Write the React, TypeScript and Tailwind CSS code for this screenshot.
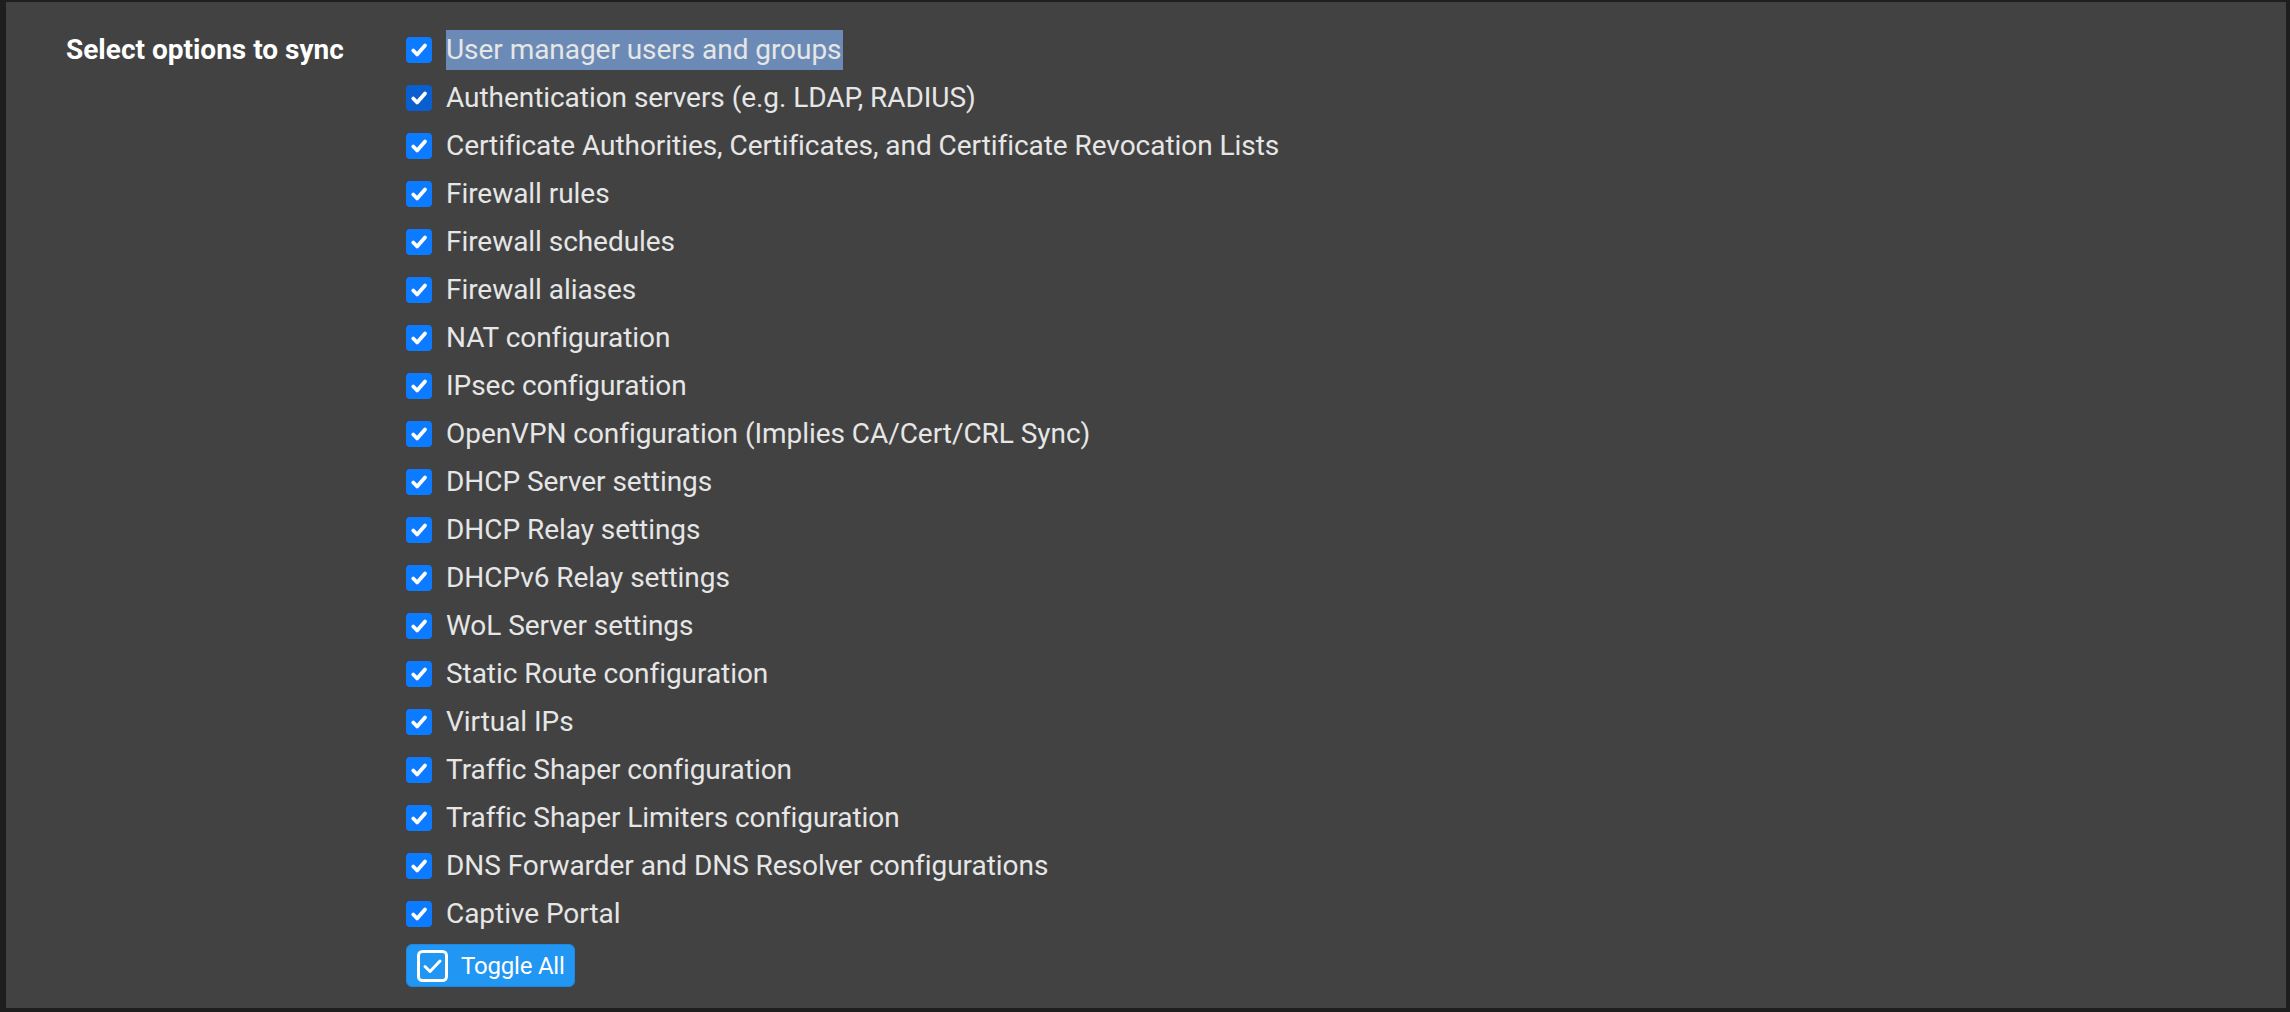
import React from "react";

const OPTIONS = [
  "User manager users and groups",
  "Authentication servers (e.g. LDAP, RADIUS)",
  "Certificate Authorities, Certificates, and Certificate Revocation Lists",
  "Firewall rules",
  "Firewall schedules",
  "Firewall aliases",
  "NAT configuration",
  "IPsec configuration",
  "OpenVPN configuration (Implies CA/Cert/CRL Sync)",
  "DHCP Server settings",
  "DHCP Relay settings",
  "DHCPv6 Relay settings",
  "WoL Server settings",
  "Static Route configuration",
  "Virtual IPs",
  "Traffic Shaper configuration",
  "Traffic Shaper Limiters configuration",
  "DNS Forwarder and DNS Resolver configurations",
  "Captive Portal",
];

function CheckBox({ dark }: { dark?: boolean }) {
  return (
    <div
      className={
        "w-[26px] h-[26px] rounded-[4px] flex items-center justify-center shrink-0 " +
        (dark ? "bg-[#0a5fd0]" : "bg-[#0c7bff]")
      }
    >
      <svg width="20" height="20" viewBox="0 0 16 16" fill="none">
        <path
          d="M3.4 8.4l3.1 3.2L12.8 4.4"
          stroke="white"
          strokeWidth="3"
          strokeLinecap="round"
          strokeLinejoin="round"
        />
      </svg>
    </div>
  );
}

export default function App() {
  return (
    <main
      className="min-h-screen bg-[#1e1e1e] pt-[2px] pl-[6px] pr-[4px] pb-[6px]"
      style={{ fontFamily: "Roboto, 'Liberation Sans', sans-serif" }}
    >
      <section className="bg-[#424242] flex pt-[24px] pb-[19px]">
        {/* Label */}
        <div className="w-[400px] shrink-0 pl-[60px]">
          <div className="h-[48px] flex items-center">
            <span className="text-[28px] leading-[40px] font-bold text-white">
              Select options to sync
            </span>
          </div>
        </div>

        {/* Options */}
        <div className="flex flex-col">
          {OPTIONS.map((o, i) => (
            <label key={o} className="h-[48px] flex items-center gap-[14px]">
              <CheckBox dark={i === 1} />
              <span
                className={
                  "text-[28px] leading-[40px] text-[#e6e6e6] tracking-[-0.05px] " +
                  (i === 0 ? "bg-[#6b8bb6] pr-[1px]" : "")
                }
              >
                {o}
              </span>
            </label>
          ))}

          <div className="mt-[6px]">
            <button className="h-[43px] inline-flex items-center gap-[13px] pl-[10px] pr-[9px] rounded-[6px] bg-[#2196f3] border border-[#1e88e5] text-white text-[24px] tracking-[-0.2px]">
              <svg width="31" height="32" viewBox="0 0 31 32" fill="none">
                <rect x="1.5" y="1.5" width="28" height="29" rx="4" stroke="white" strokeWidth="3" />
                <path
                  d="M8 16.5l5 5L23 11"
                  stroke="white"
                  strokeWidth="3"
                  strokeLinecap="round"
                  strokeLinejoin="round"
                />
              </svg>
              <span>Toggle All</span>
            </button>
          </div>
        </div>
      </section>
    </main>
  );
}
